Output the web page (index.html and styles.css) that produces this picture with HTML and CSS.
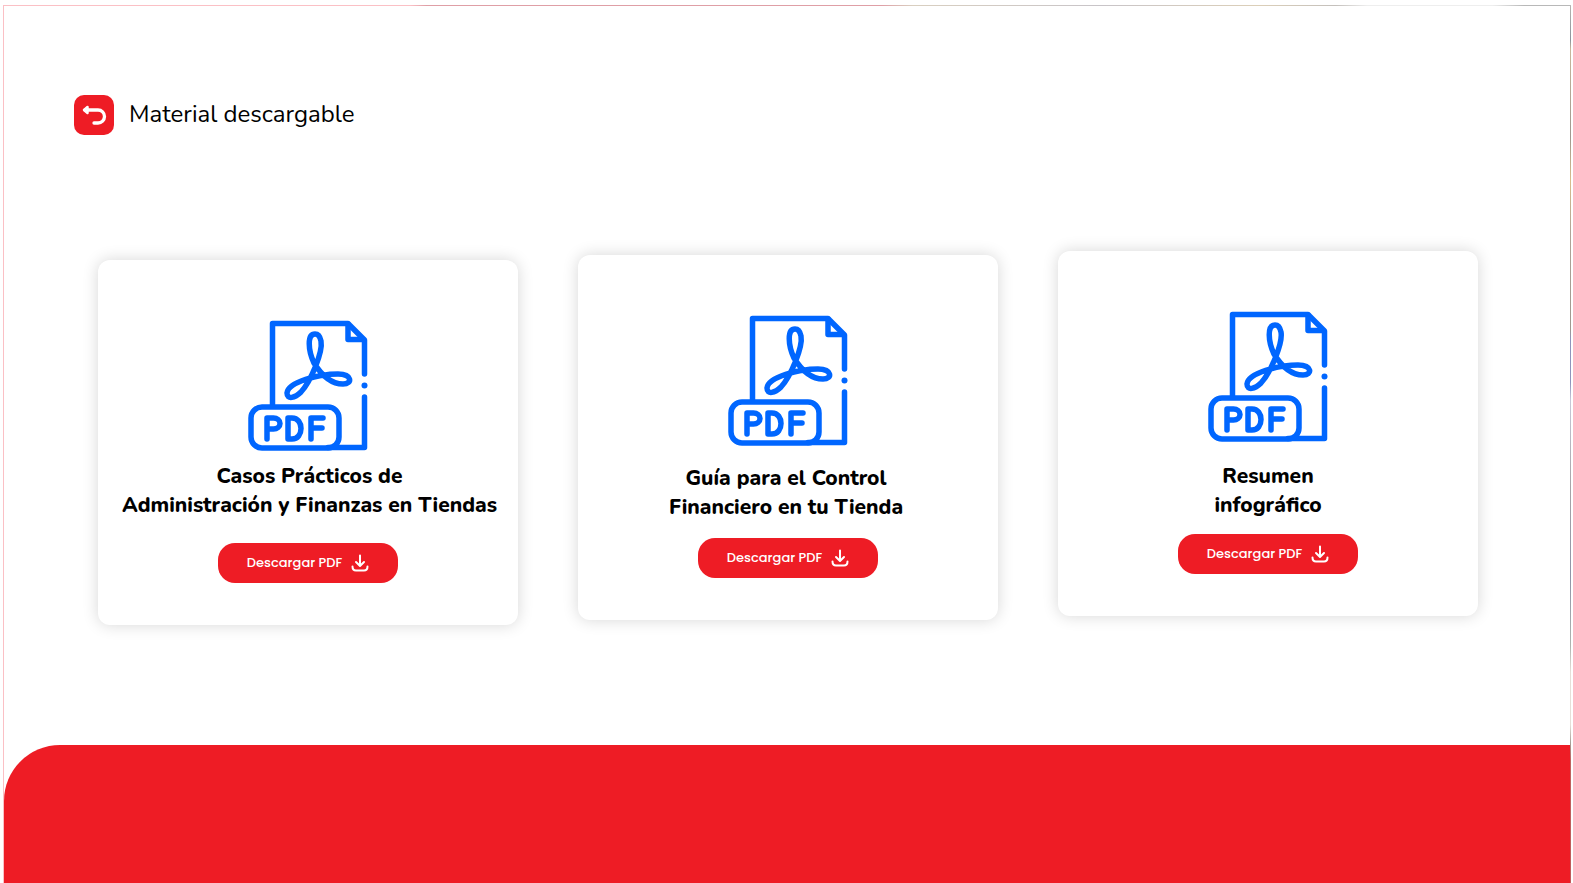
FILE: index.html
```html
<!DOCTYPE html>
<html lang="es">
<head>
<meta charset="utf-8">
<title>Material descargable</title>
<link rel="stylesheet" href="styles.css">
</head>
<body>
<svg class="defs" aria-hidden="true">
  <symbol id="pdf" viewBox="0 0 120 131">
    <g fill="none" stroke="#06f" stroke-width="5.500" stroke-linejoin="round" stroke-linecap="round">
      <path d="M24.500 86V3.500H100L116.500 20V54M116.500 77V127.500H80"/>
      <path d="M100 4V19.500H115"/>
      <rect x="3" y="87" width="88" height="41" rx="11"/>
      <path d="M67 14C59 14 60 30 66 43C74 56 84 64 95 64C105 64 104 54 90 54C71 54 40 62 39 73C39 80 47 78 53 72C63 61 75 32 73 21C72 16 70 14 67 14Z"/>
    </g>
    <g fill="none" stroke="#06f" stroke-width="5.500" stroke-linejoin="round" stroke-linecap="round">
      <path d="M19 119V98H25.500A6.500 5.500 0 0 1 25.500 109H19"/>
      <path d="M40 98V119H44C56 119 56 98 44 98Z"/>
      <path d="M63 119V98H75M63 108H74"/>
    </g>
    <circle cx="116.500" cy="65.500" r="3" fill="#06f"/>
  </symbol>
  <symbol id="download" viewBox="0 0 18 18">
    <path d="M9 1.500V11M5 8L9 12L13 8M1.500 12.500C1.500 15.500 3 16.500 5 16.500H13C15 16.500 16.500 15.500 16.500 12.500" fill="none" stroke="#fff" stroke-width="2" stroke-linecap="round" stroke-linejoin="round"/>
  </symbol>
</svg>
<main class="slide">
  <header class="header">
    <button class="back" type="button" aria-label="Volver">
      <svg viewBox="0 0 40 40" aria-hidden="true"><path d="M11 15H24A6.500 6.500 0 0 1 24 28H20" fill="none" stroke="#fff" stroke-width="3.300" stroke-linecap="round"/><path d="M13.500 12L10 15L13.500 18Z" fill="#fff" stroke="#fff" stroke-width="2.500" stroke-linejoin="round"/></svg>
    </button>
    <h1 class="title">Material descargable</h1>
  </header>
  <section class="cards">
    <article class="card card-low">
      <svg class="pdf" aria-hidden="true"><use href="#pdf"/></svg>
      <h2 class="name">Casos Prácticos de<br>Administración y Finanzas en Tiendas</h2>
      <button class="download" type="button">Descargar PDF<svg aria-hidden="true"><use href="#download"/></svg></button>
    </article>
    <article class="card card-mid">
      <svg class="pdf" aria-hidden="true"><use href="#pdf"/></svg>
      <h2 class="name">Guía para el Control<br>Financiero en tu Tienda</h2>
      <button class="download" type="button">Descargar PDF<svg aria-hidden="true"><use href="#download"/></svg></button>
    </article>
    <article class="card card-high">
      <svg class="pdf" aria-hidden="true"><use href="#pdf"/></svg>
      <h2 class="name">Resumen<br>infográfico</h2>
      <button class="download" type="button">Descargar PDF<svg aria-hidden="true"><use href="#download"/></svg></button>
    </article>
  </section>
  <footer class="band"></footer>
</main>
</body>
</html>
```
FILE: styles.css
```css
* { box-sizing: border-box; }
body { margin: 0; background: #fff; font-family: "Nunito", "Open Sans", sans-serif; color: #000; }
.defs { position: absolute; width: 0; height: 0; }
.slide {
  display: flex;
  flex-direction: column;
  min-height: calc(100vh - 5px);
  margin: 5px 2px 0 3px;
  padding: 1px 1px 0;
  background:
    linear-gradient(90deg, #fbc0c5 26%, #df9fa6 27% 56%, #d9cfc0 58%, #c8c4c8 70%, #dccfb8 80%, #c4c0bc 85%, #eee 87% 95%, #b8b8b8 97%) top / 100% 1px no-repeat,
    linear-gradient(#fbc0c5, #fbc0c5) left / 1px 100% no-repeat,
    linear-gradient(#b8b4b0, #8c939c 4%, #c9b79c 5%, #a09890 15%, #d9bd8c 20%, #b0a498 26%, #a09890 37%, #9094bc 38% 43%, #c8c8d8 45%, #a8a4a8 55%, #9094a8 65%, #b0b4b0 73%, #e6dfd8 76% 82%, #a8a098 84%, #c0625f 86%, #c05a5a) right / 1px 100% no-repeat,
    #fff;
}
.header { display: flex; align-items: center; gap: 15px; padding: 89px 70px 0; }
.back { width: 40px; height: 40px; padding: 0; border: 0; border-radius: 10px; background: #ee1c25; }
.back svg { display: block; width: 100%; height: 100%; }
.title { margin: 0; padding-bottom: 2px; font-weight: 400; font-size: 24px; line-height: 32px; }
.cards {
  display: grid;
  grid-template-columns: repeat(3, 1fr);
  align-items: start;
  gap: 60px;
  padding: 116px 92px 0 94px;
}
.card {
  display: flex;
  flex-direction: column;
  align-items: center;
  height: 365px;
  padding-top: 60px;
  border-radius: 12px;
  background: #fff;
  box-shadow: 0 0 16px rgba(0, 0, 0, .16);
}
.card-mid { margin-top: 4px; }
.card-low { margin-top: 9px; }
.pdf { width: 120px; height: 131px; }
.name { margin: 11px 0 0; padding-left: 3px; font-weight: 800; font-size: 21px; line-height: 29px; text-align: center; white-space: nowrap; }
.card-mid .name { margin-top: 18px; padding: 0 4px 0 0; }
.card-high .name { margin-top: 20px; padding: 0; }
.download {
  display: flex;
  align-items: center;
  justify-content: center;
  gap: 9px;
  width: 180px;
  height: 40px;
  margin-top: auto;
  margin-bottom: 42px;
  padding: 0;
  border: 0;
  border-radius: 17px;
  background: #ee1c25;
  color: #fff;
  font: 500 13px/20px "Poppins", Inter, sans-serif;
}
.download svg { width: 18px; height: 18px; }
.band { height: 138px; margin-top: auto; background: #ee1c25; border-top-left-radius: 56px; }
```
